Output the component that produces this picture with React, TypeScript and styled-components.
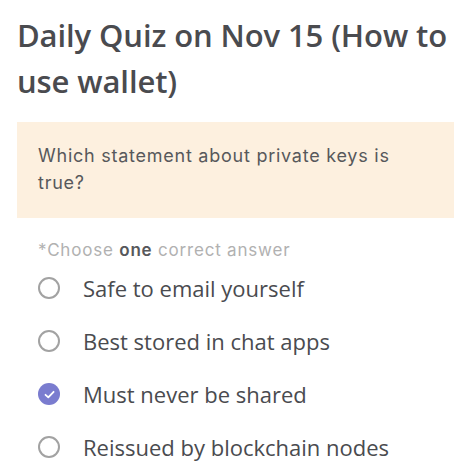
import * as React from 'react';
import styled, { createGlobalStyle } from 'styled-components';

const GlobalStyle = createGlobalStyle`
  html, body {
    margin: 0;
    padding: 0;
    background: #ffffff;
  }
`;

const Page = styled.div`
  padding: 12px 18px 0 17px;
  font-family: 'Open Sans', 'Noto Sans', sans-serif;
  color: #4b4c50;
`;

const Title = styled.h1`
  margin: 0;
  font-size: 31px;
  line-height: 46px;
  font-weight: 600;
  color: #4a4b4f;
  letter-spacing: -0.1px;
`;

const QuestionBox = styled.div`
  margin-top: 18px;
  margin-right: 2px;
  background: #fdf0df;
  padding: 20px 21px 22px;
`;

const QuestionText = styled.p`
  margin: 0;
  font-family: Inter, 'Noto Sans', sans-serif;
  font-size: 18px;
  line-height: 27px;
  letter-spacing: 0.75px;
  color: #57585b;
`;

const Hint = styled.div`
  margin: 21px 0 0 21px;
  font-family: Inter, 'Noto Sans', sans-serif;
  font-size: 17px;
  line-height: 22px;
  letter-spacing: 0.8px;
  color: #b1b1b1;

  b {
    color: #57585b;
    font-weight: 600;
  }
`;

const Options = styled.ul`
  list-style: none;
  margin: 12px 0 0 21px;
  padding: 0;
  display: flex;
  flex-direction: column;
  gap: 23px;
`;

const Option = styled.li`
  display: flex;
  align-items: center;
  gap: 23px;
  font-size: 22px;
  line-height: 30px;
  color: #4a4b4f;
`;

const Radio = styled.span<{ $checked?: boolean }>`
  flex: none;
  width: 22px;
  height: 22px;
  box-sizing: border-box;
  border-radius: 50%;
  border: ${p => (p.$checked ? 'none' : '2px solid #a2a2a2')};
  background: ${p => (p.$checked ? '#7a7ccf' : '#ffffff')};
  display: flex;
  align-items: center;
  justify-content: center;
`;

const Check = () => (
  <svg width='13' height='13' viewBox='0 0 13 13' fill='none'>
    <path d='M2.5 6.8 L5.3 9.4 L10.6 3.8' stroke='#ffffff' strokeWidth='1.8'
      strokeLinecap='round' strokeLinejoin='round' />
  </svg>
);

const answers = [
  { text: 'Safe to email yourself', checked: false },
  { text: 'Best stored in chat apps', checked: false },
  { text: 'Must never be shared', checked: true },
  { text: 'Reissued by blockchain nodes', checked: false },
];

const App: React.FC = () => (
  <Page>
    <GlobalStyle />
    <Title>Daily Quiz on Nov 15 (How to use wallet)</Title>
    <QuestionBox>
      <QuestionText>Which statement about private keys is true?</QuestionText>
    </QuestionBox>
    <Hint>*Choose <b>one</b> correct answer</Hint>
    <Options>
      {answers.map(a => (
        <Option key={a.text}>
          <Radio $checked={a.checked}>{a.checked && <Check />}</Radio>
          <span>{a.text}</span>
        </Option>
      ))}
    </Options>
  </Page>
);

export default App;
